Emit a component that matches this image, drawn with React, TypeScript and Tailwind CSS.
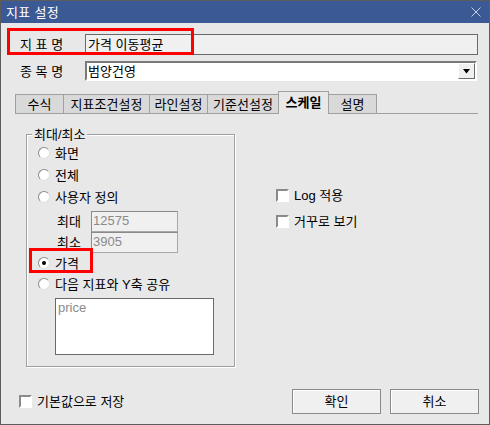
import React from "react";

const FONT = "font-['Liberation_Sans','Noto_Sans_CJK_KR',sans-serif]";

function Radio({ checked = false }: { checked?: boolean }) {
  return (
    <span className="w-[12px] h-[12px] shrink-0 rounded-full bg-white border border-t-[#8c8c8c] border-l-[#8c8c8c] border-b-[#e0e0e0] border-r-[#e0e0e0] flex items-center justify-center">
      {checked && <span className="w-[4px] h-[4px] rounded-full bg-black" />}
    </span>
  );
}

function Check() {
  return (
    <span className="w-[13px] h-[13px] shrink-0 bg-white border-2 border-t-[#8a8a8a] border-l-[#8a8a8a] border-b-white border-r-white" />
  );
}

const tabs = [
  { label: "수식", w: "w-[49px]" },
  { label: "지표조건설정", w: "w-[87px]" },
  { label: "라인설정", w: "w-[59px]" },
  { label: "기준선설정", w: "w-[72px]" },
  { label: "스케일", w: "w-[51px]", active: true },
  { label: "설명", w: "w-[49px]" },
];

export default function App() {
  return (
    <div
      className={`w-[490px] h-[425px] box-border border border-[#5c5c5c] bg-[#e8e8e8] flex flex-col text-[13px] text-black leading-none ${FONT}`}
    >
      {/* title bar */}
      <div className="h-[22px] shrink-0 bg-[#3b5994] flex items-center justify-between pl-[5px] pr-[8px] text-white text-[13px]">
        <span className="tracking-[0.3px]">지표 설정</span>
        <svg width="10" height="10" viewBox="0 0 10 10" aria-hidden="true">
          <path d="M0.5 0.5 L9.5 9.5 M9.5 0.5 L0.5 9.5" stroke="#c9d2e4" strokeWidth="1" />
        </svg>
      </div>

      <div className="relative flex-1 flex flex-col">
        {/* 지표명 */}
        <div className="mt-[11px] flex items-center h-[21px]">
          <span className="w-[84px] pl-[19px]">지 표 명</span>
          <div className="w-[393px] h-[21px] border border-[#6a6a6a] bg-[#f0f0f0] pl-[2px] flex items-center">
            가격 이동평균
          </div>
        </div>

        {/* 종목명 */}
        <div className="mt-[6px] flex items-center h-[20px]">
          <span className="w-[84px] pl-[19px]">종 목 명</span>
          <div className="w-[392px] h-[20px] border-2 border-t-[#7a7a7a] border-l-[#7a7a7a] border-b-white border-r-white bg-white flex items-center justify-between">
            <span className="pl-[1px]">범양건영</span>
            <div className="w-[17px] h-[16px] bg-[#f0f0f0] border border-t-white border-l-white border-b-[#6a6a6a] border-r-[#6a6a6a] flex items-center justify-center">
              <svg width="7" height="5" viewBox="0 0 7 5" aria-hidden="true">
                <path d="M0 0 H7 L3.5 4.5 Z" fill="#000" />
              </svg>
            </div>
          </div>
        </div>

        {/* tabs */}
        <div className="mt-[10px] ml-[14px] w-[463px] h-[23px] flex items-end border-b border-[#a0a0a0]">
          {tabs.map((t) =>
            t.active ? (
              <div
                key={t.label}
                className={`${t.w} h-[23px] -ml-px -mb-px bg-[#e8e8e8] border border-b-0 border-[#a0a0a0] flex items-center justify-center font-bold pb-[2px]`}
              >
                {t.label}
              </div>
            ) : (
              <div
                key={t.label}
                className={`${t.w} h-[19px] -ml-px first:ml-0 bg-[#d9d9d9] border border-b-0 border-[#a0a0a0] flex items-center justify-center`}
              >
                {t.label}
              </div>
            )
          )}
        </div>

        {/* panel */}
        <div className="mt-[20px] flex">
          <div className="relative ml-[25px] w-[209px] h-[233px] border border-[#a0a0a0] shadow-[1px_1px_0_#fff,inset_1px_1px_0_#fff] flex flex-col">
            <span className="absolute -top-[7px] left-[5px] px-[2px] bg-[#e8e8e8]">최대/최소</span>

            <div className="mt-[7px] h-[22px] flex items-center pl-[11px] gap-[5px]">
              <Radio />
              <span>화면</span>
            </div>
            <div className="h-[22px] flex items-center pl-[11px] gap-[5px]">
              <Radio />
              <span>전체</span>
            </div>
            <div className="h-[22px] flex items-center pl-[11px] gap-[5px]">
              <Radio />
              <span>사용자 정의</span>
            </div>
            <div className="mt-[3px] h-[21px] flex items-center pl-[30px]">
              <span className="w-[34px]">최대</span>
              <div className="w-[87px] h-[21px] bg-[#f0f0f0] border border-t-[#8a8a8a] border-l-[#8a8a8a] border-b-[#a8a8a8] border-r-[#a8a8a8] pl-[1px] text-[#8a8a8a] flex items-start pt-[2px]">
                12575
              </div>
            </div>
            <div className="h-[21px] flex items-center pl-[30px]">
              <span className="w-[34px]">최소</span>
              <div className="w-[87px] h-[21px] bg-[#f0f0f0] border border-t-[#8a8a8a] border-l-[#8a8a8a] border-b-[#a8a8a8] border-r-[#a8a8a8] pl-[1px] text-[#8a8a8a] flex items-start pt-[2px]">
                3905
              </div>
            </div>
            <div className="h-[20px] flex items-center pl-[11px] gap-[5px]">
              <Radio checked />
              <span>가격</span>
            </div>
            <div className="h-[22px] flex items-center pl-[11px] gap-[5px]">
              <Radio />
              <span>다음 지표와 Y축 공유</span>
            </div>
            <div className="mt-[3px] ml-[28px] w-[159px] h-[57px] bg-white border border-[#6a6a6a] pl-[2px] pt-[2px] text-[#8a8a8a]">
              price
            </div>

            <div className="absolute left-[2px] top-[113px] w-[64px] h-[25px] border-[3px] border-[#ff0000]" />
          </div>

          <div className="ml-[41px] mt-[55px] flex flex-col gap-[13px]">
            <div className="flex items-center gap-[5px]">
              <Check />
              <span>Log 적용</span>
            </div>
            <div className="flex items-center gap-[5px]">
              <Check />
              <span>거꾸로 보기</span>
            </div>
          </div>
        </div>

        {/* bottom */}
        <div className="mt-[22px] h-[25px] flex items-center justify-between pl-[18px] pr-[10px]">
          <div className="flex items-center gap-[5px]">
            <Check />
            <span>기본값으로 저장</span>
          </div>
          <div className="flex gap-[9px]">
            <button className="w-[89px] h-[25px] bg-[#f0f0f0] border border-[#8a8a8a] shadow-[inset_1px_1px_0_#fff]">
              확인
            </button>
            <button className="w-[89px] h-[25px] bg-[#f0f0f0] border border-[#8a8a8a] shadow-[inset_1px_1px_0_#fff]">
              취소
            </button>
          </div>
        </div>

        <div className="absolute left-[6px] top-[5px] w-[187px] h-[27px] border-[3px] border-[#ff0000]" />
      </div>
    </div>
  );
}
